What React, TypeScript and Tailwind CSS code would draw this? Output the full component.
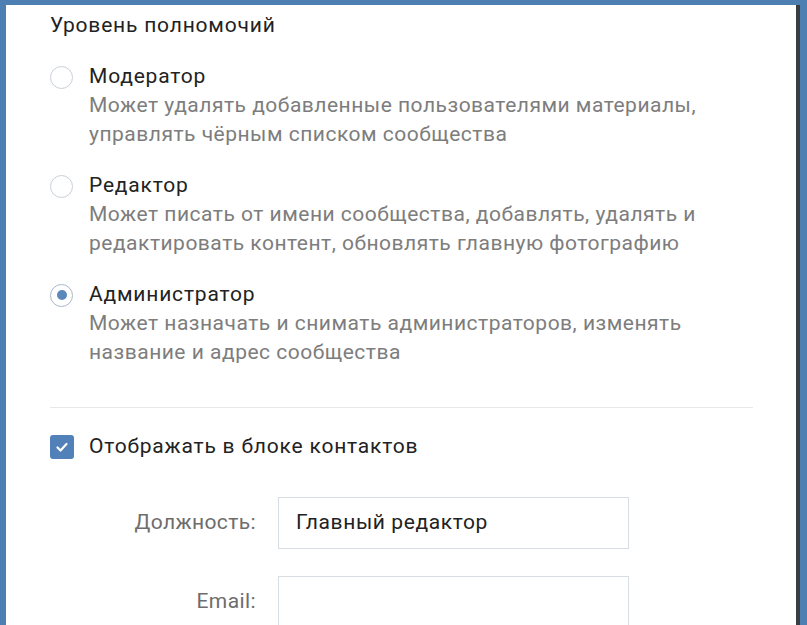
import React from 'react';

const roles = [
	{
		title: 'Модератор',
		text: ['Может удалять добавленные пользователями материалы,', 'управлять чёрным списком сообщества'],
		checked: false,
	},
	{
		title: 'Редактор',
		text: ['Может писать от имени сообщества, добавлять, удалять и', 'редактировать контент, обновлять главную фотографию'],
		checked: false,
	},
	{
		title: 'Администратор',
		text: ['Может назначать и снимать администраторов, изменять', 'название и адрес сообщества'],
		checked: true,
	},
];

function Radio({ checked }: { checked: boolean }) {
	return (
		<span
			className={
				'flex h-[23px] w-[23px] shrink-0 items-center justify-center rounded-full border-[1.5px] ' +
				(checked ? 'border-[#a9b7c6]' : 'border-[#c8cfd7]')
			}
		>
			{checked && <span className="h-[10px] w-[10px] rounded-full bg-[#5b88bb]" />}
		</span>
	);
}

function Field({ label, value }: { label: string; value: string }) {
	return (
		<div className="flex items-center">
			<div className="w-[228px] pr-[22px] text-right text-[21px] tracking-[0.4px] text-[#6d6d6d]">{label}</div>
			<div className="flex h-[52px] w-[351px] items-center border border-[#d8dde3] bg-white px-[17px] text-[21px] tracking-[0.6px] text-[#222]">
				{value}
			</div>
		</div>
	);
}

export default function App() {
	return (
		<div
			className="h-[625px] w-[807px] overflow-hidden bg-[#4e7fb2] pl-[6px] pr-[7px] pt-[5px]"
			style={{ fontFamily: 'Roboto, "Noto Sans", sans-serif' }}
		>
			<div className="h-[640px] border-r-[4px] border-[#3a3d42] bg-white pl-[44px] pr-[40px] pt-[6px]">
				<div className="text-[21px] leading-[28px] tracking-[0.8px] text-[#222]">Уровень полномочий</div>
				<div className="mt-[24px] flex flex-col gap-[23px]">
					{roles.map((r) => (
						<div key={r.title} className="flex flex-col">
							<div className="flex h-[28px] items-center gap-[16px]">
								<Radio checked={r.checked} />
								<span className="text-[21px] tracking-[0.8px] text-[#222]">{r.title}</span>
							</div>
							<div className="pl-[39px] text-[21px] leading-[29px] tracking-[0.5px] text-[#7d7d7d]">
								{r.text.map((t) => (
									<div key={t} className="whitespace-nowrap">
										{t}
									</div>
								))}
							</div>
						</div>
					))}
				</div>
				<div className="mt-[40px] h-px w-[703px] bg-[#e7e8ec]" />
				<div className="mt-[25px] flex h-[28px] items-center gap-[15px]">
					<span className="flex h-[24px] w-[24px] items-center justify-center rounded-[3px] bg-[#5181b8]">
						<svg width="14" height="14" viewBox="0 0 14 14" fill="none">
							<path d="M2.5 7.5l3 3 6-6.5" stroke="white" strokeWidth="2.2" strokeLinecap="round" strokeLinejoin="round" />
						</svg>
					</span>
					<span className="whitespace-nowrap text-[21px] tracking-[0.8px] text-[#222]">Отображать в блоке контактов</span>
				</div>
				<div className="mt-[36px] flex flex-col gap-[27px]">
					<Field label="Должность:" value="Главный редактор" />
					<Field label="Email:" value="" />
				</div>
			</div>
		</div>
	);
}
